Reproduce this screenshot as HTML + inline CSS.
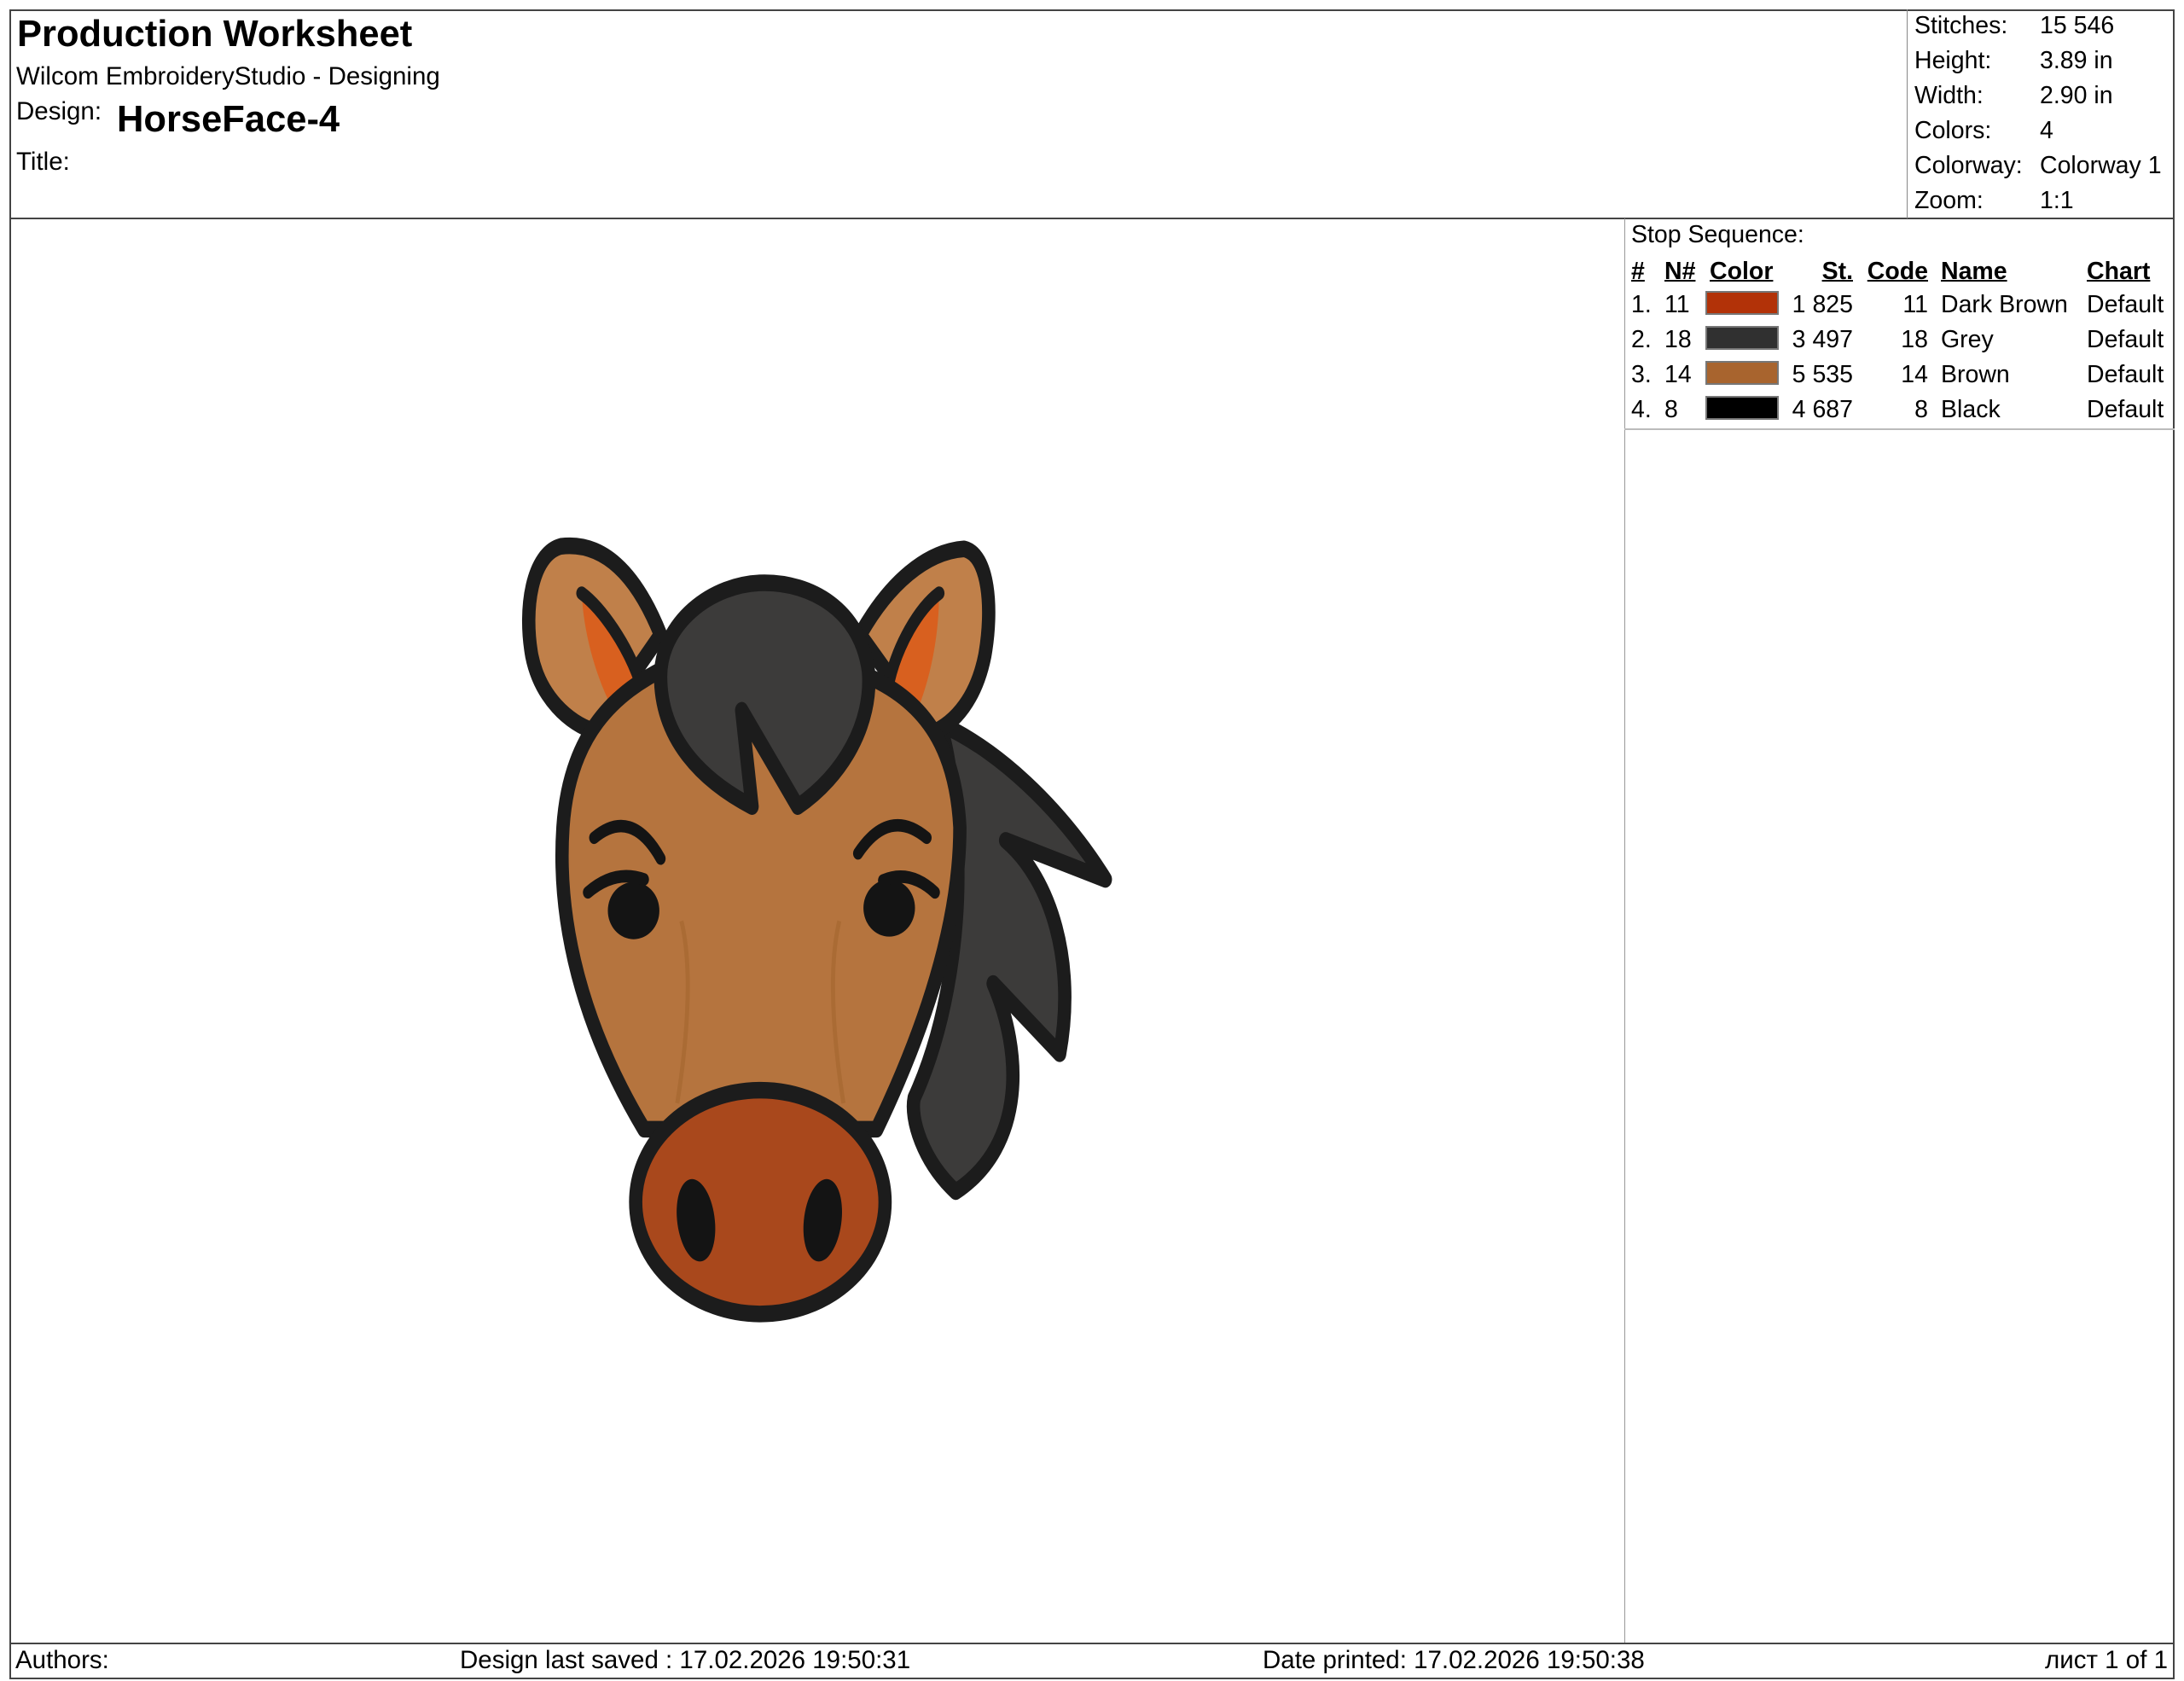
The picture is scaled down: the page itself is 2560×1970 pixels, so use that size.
<!DOCTYPE html>
<html><head><meta charset="utf-8"><style>
html,body{margin:0;padding:0;background:#fff;}
body{width:2560px;height:1970px;position:relative;overflow:hidden;font-family:"Liberation Sans",Arial,sans-serif;color:#000;}
.a{position:absolute;white-space:nowrap;line-height:1;}
.ln{position:absolute;background:#444;}
.s{font-size:28.5px;}
.h{font-size:29.5px;}
.r{text-align:right;}
.sw{position:absolute;width:86px;height:28px;box-sizing:border-box;border:2px solid #777;}
u{text-decoration:underline;text-decoration-thickness:2px;}
</style></head><body>
<div class="ln" style="left:11px;top:11px;width:2538px;height:2px"></div>
<div class="ln" style="left:11px;top:11px;width:2px;height:1957px"></div>
<div class="ln" style="left:2547px;top:11px;width:2px;height:1957px"></div>
<div class="ln" style="left:11px;top:255px;width:2538px;height:2px"></div>
<div class="ln" style="left:2235px;top:11px;width:1px;height:245px;background:#888"></div>
<div class="ln" style="left:1904px;top:256px;width:1px;height:1669px;background:#999"></div>
<div class="ln" style="left:1904px;top:502px;width:645px;height:2px;background:#bbb"></div>
<div class="ln" style="left:11px;top:1925px;width:2538px;height:2px"></div>
<div class="ln" style="left:11px;top:1966px;width:2538px;height:2px"></div>

<div class="a" style="left:20px;top:19px;font-size:43.5px;font-weight:bold">Production Worksheet</div>
<div class="a h" style="left:19px;top:75px">Wilcom EmbroideryStudio - Designing</div>
<div class="a h" style="left:19px;top:116px">Design:</div>
<div class="a" style="left:137px;top:119px;font-size:43.5px;font-weight:bold">HorseFace-4</div>
<div class="a h" style="left:19px;top:175px">Title:</div>

<div class="a s" style="left:2244px;top:16px">Stitches:</div><div class="a s" style="left:2391px;top:16px">15 546</div>
<div class="a s" style="left:2244px;top:57px">Height:</div><div class="a s" style="left:2391px;top:57px">3.89 in</div>
<div class="a s" style="left:2244px;top:98px">Width:</div><div class="a s" style="left:2391px;top:98px">2.90 in</div>
<div class="a s" style="left:2244px;top:139px">Colors:</div><div class="a s" style="left:2391px;top:139px">4</div>
<div class="a s" style="left:2244px;top:180px">Colorway:</div><div class="a s" style="left:2391px;top:180px">Colorway 1</div>
<div class="a s" style="left:2244px;top:221px">Zoom:</div><div class="a s" style="left:2391px;top:221px">1:1</div>

<div class="a s" style="left:1912px;top:261px">Stop Sequence:</div>
<div class="a s" style="left:1912px;top:304px;font-weight:bold"><u>#</u></div>
<div class="a s" style="left:1951px;top:304px;font-weight:bold"><u>N#</u></div>
<div class="a s" style="left:2004px;top:304px;font-weight:bold"><u>Color</u></div>
<div class="a s r" style="left:2072px;width:100px;top:304px;font-weight:bold"><u>St.</u></div>
<div class="a s r" style="left:2160px;width:100px;top:304px;font-weight:bold"><u>Code</u></div>
<div class="a s" style="left:2275px;top:304px;font-weight:bold"><u>Name</u></div>
<div class="a s" style="left:2446px;top:304px;font-weight:bold"><u>Chart</u></div>

<div class="a s" style="left:1912px;top:343px">1.</div><div class="a s" style="left:1951px;top:343px">11</div>
<div class="sw" style="left:1999px;top:341px;background:#b23208"></div>
<div class="a s r" style="left:2072px;width:100px;top:343px">1 825</div><div class="a s r" style="left:2160px;width:100px;top:343px">11</div>
<div class="a s" style="left:2275px;top:343px">Dark Brown</div><div class="a s" style="left:2446px;top:343px">Default</div>

<div class="a s" style="left:1912px;top:384px">2.</div><div class="a s" style="left:1951px;top:384px">18</div>
<div class="sw" style="left:1999px;top:382px;background:#303030"></div>
<div class="a s r" style="left:2072px;width:100px;top:384px">3 497</div><div class="a s r" style="left:2160px;width:100px;top:384px">18</div>
<div class="a s" style="left:2275px;top:384px">Grey</div><div class="a s" style="left:2446px;top:384px">Default</div>

<div class="a s" style="left:1912px;top:425px">3.</div><div class="a s" style="left:1951px;top:425px">14</div>
<div class="sw" style="left:1999px;top:423px;background:#a8642e"></div>
<div class="a s r" style="left:2072px;width:100px;top:425px">5 535</div><div class="a s r" style="left:2160px;width:100px;top:425px">14</div>
<div class="a s" style="left:2275px;top:425px">Brown</div><div class="a s" style="left:2446px;top:425px">Default</div>

<div class="a s" style="left:1912px;top:466px">4.</div><div class="a s" style="left:1951px;top:466px">8</div>
<div class="sw" style="left:1999px;top:464px;background:#000"></div>
<div class="a s r" style="left:2072px;width:100px;top:466px">4 687</div><div class="a s r" style="left:2160px;width:100px;top:466px">8</div>
<div class="a s" style="left:2275px;top:466px">Black</div><div class="a s" style="left:2446px;top:466px">Default</div>

<div class="a h" style="left:18px;top:1931px">Authors:</div>
<div class="a h" style="left:539px;top:1931px">Design last saved : 17.02.2026 19:50:31</div>
<div class="a h" style="left:1480px;top:1931px">Date printed: 17.02.2026 19:50:38</div>
<div class="a h r" style="left:2241px;width:300px;top:1931px">лист 1 of 1</div>

<svg style="position:absolute;left:560px;top:600px;overflow:visible" width="760" height="960" viewBox="0 14 1560 1574" preserveAspectRatio="none">
<g stroke="#1c1c1c" stroke-width="32" stroke-linejoin="round" stroke-linecap="round">
<path d="M1110 420 C1250 470 1400 580 1510 720 L1270 645 C1380 720 1440 880 1400 1055 L1240 920 C1310 1050 1320 1230 1150 1320 C1070 1260 1040 1180 1050 1140 C1130 1000 1170 800 1150 620 C1140 520 1130 460 1110 420 Z" fill="#3c3b3a"/>
<path d="M440 250 C380 130 300 70 200 80 C130 95 110 200 130 290 C150 370 220 420 280 435 Z" fill="#c0804a"/>
<path d="M920 250 C990 150 1080 90 1170 85 C1230 95 1240 200 1220 290 C1200 370 1150 420 1090 440 Z" fill="#c0804a"/>
<path d="M250 170 C300 200 360 270 390 340 L320 385 C285 330 255 250 250 170 Z" fill="#d8601f" stroke-width="0"/>
<path d="M1110 170 C1060 200 1010 270 990 340 L1060 390 C1090 330 1110 250 1110 170 Z" fill="#d8601f" stroke-width="0"/>
<path d="M250 170 C300 200 360 270 390 340" fill="none" stroke-width="26"/>
<path d="M1110 170 C1060 200 1010 270 990 340" fill="none" stroke-width="26"/>
<path d="M460 310 C330 360 220 440 205 620 C190 800 250 1000 400 1200 L960 1200 C1080 1000 1160 800 1160 620 C1150 470 1080 380 940 330 Z" fill="#b5743e"/>
<path d="M660 580 L635 395 L770 580 C880 520 950 420 940 320 C920 200 800 150 690 150 C560 150 440 230 440 330 C440 450 540 530 660 580 Z" fill="#3c3b3a"/>
<ellipse cx="680" cy="1340" rx="300" ry="215" fill="#a9481c"/>
</g>
<g fill="#141414">
<ellipse cx="525" cy="1375" rx="45" ry="80" transform="rotate(-10 525 1375)"/>
<ellipse cx="830" cy="1375" rx="45" ry="80" transform="rotate(10 830 1375)"/>
<ellipse cx="375" cy="780" rx="62" ry="55"/><ellipse cx="990" cy="775" rx="62" ry="55"/>
</g>
<g stroke="#141414" stroke-width="24" fill="none" stroke-linecap="round">
<path d="M280 640 Q370 580 440 680"/><path d="M915 670 Q990 580 1080 640"/>
<path d="M265 745 Q330 700 400 720"/><path d="M1100 745 Q1040 700 975 722"/>
</g>
<g stroke="#a3662f" stroke-width="10" fill="none" opacity="0.6">
<path d="M490 800 C520 900 500 1050 480 1150"/><path d="M870 800 C840 900 860 1050 880 1150"/>
</g>
</svg>
</body></html>
